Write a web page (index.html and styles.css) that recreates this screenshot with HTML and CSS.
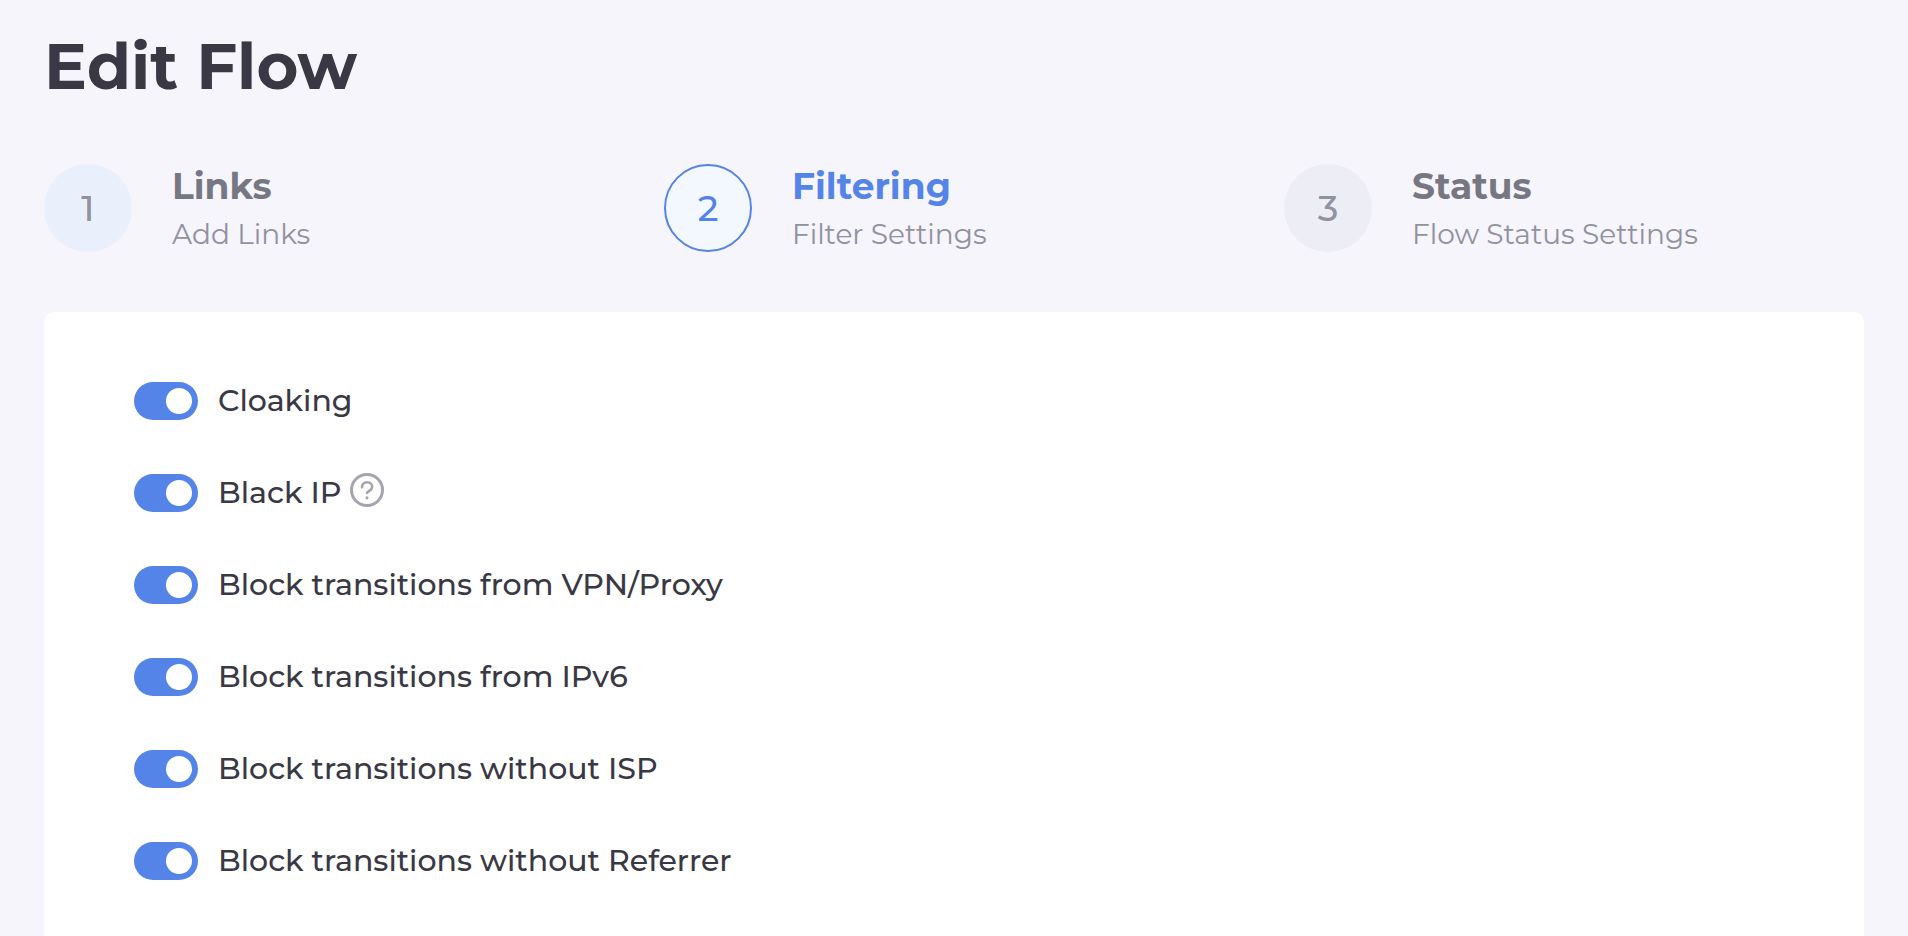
FILE: index.html
```html
<!DOCTYPE html>
<html lang="en">

<head>
    <meta charset="UTF-8">
    <meta name="viewport" content="width=device-width, initial-scale=1">
    <title>Edit Flow</title>
    <link rel="stylesheet" href="styles.css">
</head>

<body>
    <main class="page">
        <h1 class="title">Edit Flow</h1>

        <ol class="steps">
            <li class="step done">
                <span class="step-num">1</span>
                <div>
                    <h2 class="step-name">Links</h2>
                    <p class="step-text">Add Links</p>
                </div>
            </li>
            <li class="step active">
                <span class="step-num">2</span>
                <div>
                    <h2 class="step-name">Filtering</h2>
                    <p class="step-text">Filter Settings</p>
                </div>
            </li>
            <li class="step">
                <span class="step-num">3</span>
                <div>
                    <h2 class="step-name">Status</h2>
                    <p class="step-text">Flow Status Settings</p>
                </div>
            </li>
        </ol>

        <form class="card">
            <div class="row">
                <input class="switch" type="checkbox" id="cloaking" checked>
                <label for="cloaking">Cloaking</label>
            </div>
            <div class="row">
                <input class="switch" type="checkbox" id="black-ip" checked>
                <label for="black-ip">Black IP</label>
                <svg class="help" viewBox="0 0 34 34" fill="none" stroke="currentColor">
                    <circle cx="17" cy="17" r="15.5" stroke-width="3"/>
                    <path d="M12 14.2C12 11.2 14.2 9.3 17 9.3s5.2 1.9 5.2 4.6c0 3.1-3.9 3.9-5.2 6" stroke-width="2.6" stroke-linecap="round"/>
                    <circle cx="17" cy="24.8" r="1.6" fill="currentColor" stroke="none"/>
                </svg>
            </div>
            <div class="row">
                <input class="switch" type="checkbox" id="vpn" checked>
                <label for="vpn">Block transitions from VPN/Proxy</label>
            </div>
            <div class="row">
                <input class="switch" type="checkbox" id="ipv6" checked>
                <label for="ipv6">Block transitions from IPv6</label>
            </div>
            <div class="row">
                <input class="switch" type="checkbox" id="isp" checked>
                <label for="isp">Block transitions without ISP</label>
            </div>
            <div class="row">
                <input class="switch" type="checkbox" id="referrer" checked>
                <label for="referrer">Block transitions without Referrer</label>
            </div>
        </form>
    </main>
</body>

</html>
```
FILE: styles.css
```css
* {
    box-sizing: border-box;
    margin: 0;
    padding: 0;
}

body {
    background: #f5f5fb;
    color: #393844;
    font-family: Montserrat, Inter, sans-serif;
}

.page {
    display: flex;
    flex-direction: column;
    min-height: 100vh;
    padding: 26px 44px 0;
}

.title {
    font-size: 64px;
    font-weight: 700;
    line-height: 80px;
    margin-bottom: 58px;
}

.steps {
    display: grid;
    grid-template-columns: repeat(3, 1fr);
    gap: 40px;
    list-style: none;
    margin-bottom: 60px;
}

.step {
    display: flex;
    align-items: center;
    gap: 40px;
}

.step-num {
    flex: none;
    width: 88px;
    height: 88px;
    border-radius: 50%;
    background: #ededf5;
    color: #9191a0;
    font-size: 36px;
    font-weight: 500;
    line-height: 88px;
    text-align: center;
}

.step-name {
    margin-bottom: 8px;
    color: #777783;
    font-size: 36px;
    font-weight: 700;
    line-height: 44px;
}

.step-text {
    color: #9191a0;
    font-size: 28px;
    line-height: 36px;
}

.done .step-num {
    background: #e9f0fc;
}

.active .step-num {
    background: #f3f8ff;
    border: 2px solid #5584e9;
    color: #5584e9;
    line-height: 84px;
}

.active .step-name {
    color: #5584e9;
}

.card {
    display: flex;
    flex: 1;
    flex-direction: column;
    gap: 54px;
    padding: 70px 90px 54px;
    background: #fff;
    border-radius: 10px 10px 0 0;
}

.row {
    display: flex;
    align-items: center;
    height: 38px;
    font-size: 30px;
    font-weight: 500;
    line-height: 36px;
}

.switch {
    appearance: none;
    flex: none;
    width: 64px;
    height: 38px;
    margin-right: 20px;
    padding: 6px;
    border-radius: 19px;
    background: #5584e9;
    cursor: pointer;
}

.switch::before {
    content: "";
    display: block;
    width: 26px;
    height: 26px;
    border-radius: 50%;
    background: #fff;
}

.switch:checked::before {
    margin-left: auto;
}

.switch:not(:checked) {
    background: #c9c9d4;
}

.help {
    width: 34px;
    height: 34px;
    margin: 0 0 6px 9px;
    color: #a5a4b0;
}
```
